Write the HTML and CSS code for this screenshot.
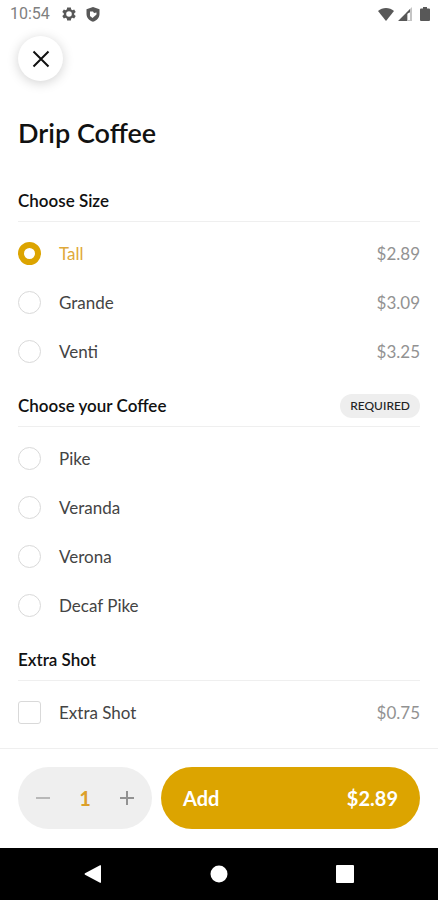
FILE: index.html
```html
<!DOCTYPE html>
<html lang="en">
<head>
<meta charset="utf-8">
<meta name="viewport" content="width=device-width, initial-scale=1">
<title>Drip Coffee</title>
<link rel="stylesheet" href="styles.css">
</head>
<body>
<div class="screen">
  <header class="status">
    <span class="clock">10:54</span>
    <svg class="status-icon gear" width="14" height="14" viewBox="2 2 20 20" aria-hidden="true"><path fill-rule="evenodd" d="M19.4 13a7.500 7.500 0 0 0 0-2l2.200-1.700-2.200-3.800-2.600 1a7.500 7.500 0 0 0-1.700-1L14.700 2.700h-5.400l-.4 2.800a7.500 7.500 0 0 0-1.700 1l-2.600-1-2.200 3.800L4.600 11a7.500 7.500 0 0 0 0 2l-2.200 1.700 2.200 3.800 2.600-1a7.500 7.500 0 0 0 1.700 1l.4 2.800h5.400l.4-2.800a7.500 7.500 0 0 0 1.700-1l2.600 1 2.200-3.800zM12 16a4 4 0 1 1 0-8 4 4 0 0 1 0 8z"/></svg>
    <svg class="status-icon" width="14" height="15" viewBox="0 0 14 15" aria-hidden="true"><path fill-rule="evenodd" d="M7 0l6.500 2.200V7c0 3.700-2.500 6.500-6.500 7.800C3 13.500.5 10.700.5 7V2.200zM4 4.500v4.500l2.500 2L10.500 7.500V5.500L8 6 7 4.500z"/></svg>
    <span class="status-right">
      <svg class="status-icon" width="16" height="13" viewBox="0 0 16 13" aria-hidden="true"><path d="M0 3C4.500-1 11.500-1 16 3L8 13z"/></svg>
      <svg class="status-icon" width="14" height="14" viewBox="0 0 14 14" aria-hidden="true"><path class="signal-rest" d="M14 0v14H8V6z"/><path class="signal-gap" d="M10 6h2v7h-2z"/><path d="M0 14L12 2v3L9 7v7z"/></svg>
      <svg class="status-icon" width="10" height="14" viewBox="0 0 10 14" aria-hidden="true"><path d="M3 0h4v1.500h2q1 0 1 1V13q0 1-1 1H1q-1 0-1-1V2.500q0-1 1-1h2z"/></svg>
    </span>
  </header>

  <main class="content">
    <button class="close" type="button" aria-label="Close">
      <svg width="18" height="18" viewBox="0 0 18 18" aria-hidden="true"><path d="M1.500 1.500l15 15M16.500 1.500l-15 15"/></svg>
    </button>
    <h1 class="title">Drip Coffee</h1>

    <section class="group" role="radiogroup" aria-labelledby="size-heading">
      <div class="group-head"><h2 id="size-heading">Choose Size</h2></div>
      <div class="options">
        <label class="option"><input type="radio" name="size" checked><span class="name">Tall</span><span class="price">$2.89</span></label>
        <label class="option"><input type="radio" name="size"><span class="name">Grande</span><span class="price">$3.09</span></label>
        <label class="option"><input type="radio" name="size"><span class="name">Venti</span><span class="price">$3.25</span></label>
      </div>
    </section>

    <section class="group" role="radiogroup" aria-labelledby="coffee-heading">
      <div class="group-head"><h2 id="coffee-heading">Choose your Coffee</h2><span class="badge">REQUIRED</span></div>
      <div class="options">
        <label class="option"><input type="radio" name="coffee"><span class="name">Pike</span></label>
        <label class="option"><input type="radio" name="coffee"><span class="name">Veranda</span></label>
        <label class="option"><input type="radio" name="coffee"><span class="name">Verona</span></label>
        <label class="option"><input type="radio" name="coffee"><span class="name">Decaf Pike</span></label>
      </div>
    </section>

    <section class="group" aria-labelledby="shot-heading">
      <div class="group-head"><h2 id="shot-heading">Extra Shot</h2></div>
      <div class="options">
        <label class="option"><input type="checkbox" name="shot"><span class="name">Extra Shot</span><span class="price">$0.75</span></label>
      </div>
    </section>
  </main>

  <footer class="order">
    <div class="stepper">
      <button class="step minus" type="button" aria-label="Decrease quantity"><svg width="14" height="14" viewBox="0 0 14 14" aria-hidden="true"><path d="M0 7h14"/></svg></button>
      <output class="quantity">1</output>
      <button class="step" type="button" aria-label="Increase quantity"><svg width="14" height="14" viewBox="0 0 14 14" aria-hidden="true"><path d="M0 7h14M7 0v14"/></svg></button>
    </div>
    <button class="add" type="button"><span>Add</span><span>$2.89</span></button>
  </footer>

  <nav class="system" aria-label="System">
    <button type="button" aria-label="Back"><svg width="18" height="18" viewBox="0 0 18 18" aria-hidden="true"><path d="M17 .5v17q0 .5-1 .2L1 9.800Q0 9 1 8.200L16 .3q1-.3 1 .2z"/></svg></button>
    <button type="button" aria-label="Home"><svg width="18" height="18" viewBox="0 0 18 18" aria-hidden="true"><circle cx="9" cy="9" r="8.500"/></svg></button>
    <button type="button" aria-label="Recent apps"><svg width="18" height="18" viewBox="0 0 18 18" aria-hidden="true"><rect width="18" height="18" rx="1"/></svg></button>
  </nav>
</div>
</body>
</html>
```
FILE: styles.css
```css
* {
  box-sizing: border-box;
}

body {
  margin: 0;
  background: #fff;
  color: #111;
  font-family: Lato, "Liberation Sans", sans-serif;
}

button {
  padding: 0;
  border: 0;
  background: none;
  color: inherit;
  font: inherit;
  cursor: pointer;
}

.screen {
  display: flex;
  flex-direction: column;
  min-height: 100vh;
}

.status {
  display: flex;
  align-items: center;
  height: 28px;
  padding: 0 8px 0 10px;
  color: #808080;
  font: 16px/28px Roboto, sans-serif;
}

.status-icon {
  fill: #585858;
}

.gear {
  margin: 0 10px 0 12px;
}

.status-right {
  display: flex;
  align-items: center;
  gap: 4px;
  margin-left: auto;
}

.status-right .status-icon:last-child {
  margin-left: 4px;
}

.signal-rest {
  fill: #c4c4c4;
}

.signal-gap {
  fill: #fff;
}

.content {
  flex: 1;
  padding: 8px 18px 11px;
}

.close {
  display: grid;
  place-items: center;
  width: 45px;
  height: 45px;
  border-radius: 50%;
  background: #fff;
  box-shadow: 0 2px 12px rgba(0, 0, 0, 0.18);
}

.close svg {
  fill: none;
  stroke: #111;
  stroke-width: 2;
}

.title {
  margin: 32px 0 28px;
  font-size: 27px;
  font-weight: 600;
  line-height: 40px;
}

.group + .group {
  margin-top: 10px;
}

.group-head {
  display: flex;
  align-items: center;
  justify-content: space-between;
  height: 41px;
  border-bottom: 1px solid #efefef;
}

h2 {
  margin: 0;
  font-size: 17px;
  font-weight: 600;
  line-height: 24px;
}

.badge {
  padding: 0 10px;
  border-radius: 12px;
  background: #eee;
  color: #222;
  font-size: 12px;
  font-weight: 500;
  line-height: 24px;
}

.options {
  padding-top: 7px;
}

.option {
  display: flex;
  align-items: center;
  height: 49px;
  color: #444;
  font-size: 17px;
  line-height: 24px;
  cursor: pointer;
}

.option input {
  appearance: none;
  width: 23px;
  height: 23px;
  margin: 0 18px 0 0;
  border: 1px solid #d9d9d9;
  border-radius: 3px;
  background: #fff;
}

.option input[type="radio"] {
  border-radius: 50%;
}

.option input:checked {
  border: 6px solid #dca400;
}

.option input:checked + .name {
  color: #dfa93a;
}

.price {
  margin-left: auto;
  color: #929292;
}

.order {
  display: flex;
  gap: 9px;
  padding: 18px 18px 19px;
  border-top: 1px solid #efefef;
}

.stepper {
  display: flex;
  align-items: center;
  flex: 0 0 134px;
  height: 62px;
  border-radius: 31px;
  background: #efefef;
}

.step {
  display: grid;
  flex: 1;
  place-items: center;
  height: 62px;
}

.step svg {
  stroke: #929292;
  stroke-width: 2;
}

.minus svg {
  stroke: #b8b8b8;
}

.quantity {
  flex: 0 0 34px;
  color: #dca02a;
  font-size: 20px;
  font-weight: 700;
  text-align: center;
}

.add {
  display: flex;
  flex: 1;
  align-items: center;
  justify-content: space-between;
  padding: 0 22px;
  border-radius: 31px;
  background: #dca400;
  color: #fff;
  font-size: 20px;
  font-weight: 700;
}

.system {
  display: flex;
  align-items: center;
  justify-content: center;
  gap: 108px;
  height: 52px;
  background: #000;
}

.system button {
  display: grid;
  place-items: center;
}

.system svg {
  fill: #fff;
}
```
